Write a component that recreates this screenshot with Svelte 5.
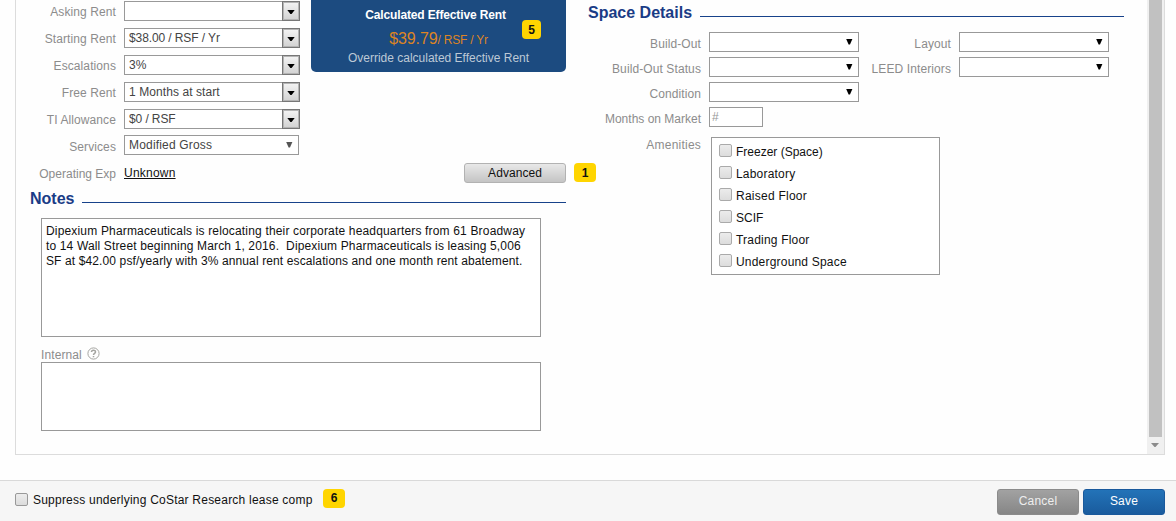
<script>
  const rentFields = [
    { label: 'Asking Rent', value: '', track: 0 },
    { label: 'Starting Rent', value: '$38.00 / RSF / Yr', track: -0.1 },
    { label: 'Escalations', value: '3%', track: 0 },
    { label: 'Free Rent', value: '1 Months at start', track: 0.08 },
    { label: 'TI Allowance', value: '$0 / RSF', track: -0.1 }
  ];
  const amenities = [
    { name: 'Freezer (Space)', track: 0 },
    { name: 'Laboratory', track: 0.2 },
    { name: 'Raised Floor', track: 0.25 },
    { name: 'SCIF', track: 0 },
    { name: 'Trading Floor', track: 0.2 },
    { name: 'Underground Space', track: 0.2 }
  ];
  const noteLines = [
    { text: 'Dipexium Pharmaceuticals is relocating their corporate headquarters from 61 Broadway', track: 0.17 },
    { text: 'to 14 Wall Street beginning March 1, 2016.  Dipexium Pharmaceuticals is leasing 5,006', track: 0.145 },
    { text: 'SF at $42.00 psf/yearly with 3% annual rent escalations and one month rent abatement.', track: 0.12 }
  ];
</script>

{#snippet arrow()}
  <svg class="arrow" width="7" height="6" viewBox="0 0 7 6"><path d="M0.2 0H6.4L4 5.6H2.6Z" fill="currentColor" /></svg>
{/snippet}

{#snippet picker(label)}
  <div class="detail">
    <span class="label">{label}</span>
    <div class="select">{@render arrow()}</div>
  </div>
{/snippet}

<div class="page">
  <main class="panel">
    <section class="left">
      <div class="top">
        <div class="fields">
          {#each rentFields as f}
            <div class="row">
              <span class="label">{f.label}</span>
              <div class="combo">
                <span class="value" style:letter-spacing="{f.track}px">{f.value}</span>
                <span class="drop"><svg width="8" height="4" viewBox="0 0 8 4"><path d="M0.3 0H7.7L4.6 4H3.4Z" fill="#000" /></svg></span>
              </div>
            </div>
          {/each}
          <div class="row services">
            <span class="label">Services</span>
            <div class="select"><span class="value">Modified Gross</span>{@render arrow()}</div>
          </div>
        </div>
        <div class="effective">
          <b>Calculated Effective Rent</b>
          <div class="price"><span class="amount">$39.79</span><span class="unit">/ RSF / Yr</span></div>
          <span class="override">Override calculated Effective Rent</span>
          <span class="badge five">5</span>
        </div>
      </div>
      <div class="operating">
        <span class="label">Operating Exp</span>
        <span class="unknown">Unknown</span>
        <button class="advanced">Advanced</button>
        <span class="badge one">1</span>
      </div>
      <h2 class="notes-title"><span>Notes</span><i></i></h2>
      <div class="area notes">
        {#each noteLines as line}<div style:letter-spacing="{line.track}px">{line.text}</div>{/each}
      </div>
      <div class="internal-label">
        <span>Internal</span>
        <svg width="13" height="13" viewBox="0 0 13 13" fill="none" stroke="#a4a4a0">
          <circle cx="6.5" cy="6.5" r="5.6" />
          <path d="M4.5 5.1C4.5 2.7 8.5 2.7 8.5 5C8.5 6.3 6.5 6.3 6.5 8M6.5 9V10.3" stroke-width="1.5" />
        </svg>
      </div>
      <div class="area internal"></div>
    </section>

    <section class="right">
      <h2><span>Space Details</span><i></i></h2>
      <div class="details">
        <div class="column">
          {@render picker('Build-Out')}
          {@render picker('Build-Out Status')}
          {@render picker('Condition')}
          <div class="detail">
            <span class="label tight">Months on Market</span>
            <div class="months">#</div>
          </div>
        </div>
        <div class="column second">
          {@render picker('Layout')}
          {@render picker('LEED Interiors')}
        </div>
      </div>
      <div class="amenities">
        <span class="label">Amenities</span>
        <div class="list">
          {#each amenities as a}
            <div class="option"><span class="check"></span><span style:letter-spacing="{a.track}px">{a.name}</span></div>
          {/each}
        </div>
      </div>
    </section>

    <div class="scrollbar">
      <div class="thumb"></div>
      <svg width="8" height="4" viewBox="0 0 8 4"><path d="M0 0H8L4.5 4H3.5Z" fill="#8b8b8b" /></svg>
    </div>
  </main>

  <footer>
    <span class="check"></span>
    <span class="suppress">Suppress underlying CoStar Research lease comp</span>
    <span class="badge six">6</span>
    <button class="cancel">Cancel</button>
    <button class="save">Save</button>
  </footer>
</div>

<style>
  :global(body) { background: #fefefe; overflow: hidden; }
  .page {
    box-sizing: border-box; width: 1176px; height: 521px; display: flex; flex-direction: column;
    font: 12px/15px "Liberation Sans", Arial, sans-serif; letter-spacing: 0.22px; color: #111; background: #fefefe;
  }
  .page * { box-sizing: border-box; }
  .panel {
    width: 1150px; height: 455px; margin-left: 15px; display: flex;
    border: 1px solid #dcdcdc; border-top: 0; background: #fefefe; flex: none;
  }
  .left { width: 550px; padding-left: 14px; flex: none; }
  .top { display: flex; height: 155px; }
  .fields { width: 270px; margin-right: 11px; padding-top: 1px; flex: none; }
  .row { display: flex; height: 27px; }
  .row.services { margin-top: -1px; }
  .row.services .label { padding-top: 5px; }
  .label { color: #8c8c8c; text-align: right; white-space: nowrap; letter-spacing: 0.1px; }
  .label.tight { letter-spacing: 0; }
  .row .label { width: 86px; margin-right: 8px; padding-top: 4px; }
  .combo { width: 176px; height: 20px; display: flex; justify-content: space-between; border: 1px solid #999; background: #fff; }
  .value { color: #444; padding: 2px 0 0 4px; line-height: 15px; white-space: nowrap; }
  .drop {
    width: 18px; height: 20px; margin: -1px -1px 0 0; border: 1px solid #777;
    box-shadow: inset 0 0 0 1px #b4b4b4;
    background: linear-gradient(#f4f4f4, #d2d2d2); display: flex; align-items: center; justify-content: center;
  }
  .drop svg { margin-top: 2px; }
  .select {
    width: 150px; height: 20px; border: 1px solid #999; background: #fff; color: #000;
    display: flex; justify-content: space-between;
  }
  .row .select { width: 175px; color: #555; }
  .row .select .value { letter-spacing: 0.18px; }
  .arrow { margin: 6px 5px 0 auto; }
  .effective {
    position: relative; width: 255px; height: 72px; border-radius: 0 0 5px 5px; background: #1c4b80;
    display: flex; flex-direction: column; align-items: center; padding-top: 8px; white-space: nowrap;
  }
  .effective b { color: #fff; letter-spacing: -0.14px; margin-right: 6px; }
  .price { color: #dc8424; height: 20px; margin-top: 6px; line-height: 20px; }
  .amount { font-size: 16px; letter-spacing: -0.1px; }
  .unit { letter-spacing: -0.22px; }
  .override { color: #bdc9d6; margin-top: 2px; letter-spacing: 0; }
  .badge {
    width: 22px; height: 19px; border-radius: 4px; background: #ffd500; color: #111; font-weight: bold;
    line-height: 20px; text-align: center; letter-spacing: 0;
  }
  .five { position: absolute; left: 211px; top: 20px; width: 19px; }
  .operating { display: flex; height: 34px; padding-top: 8px; margin-right: -40px; }
  .operating .label { width: 86px; margin-right: 8px; padding-top: 4px; letter-spacing: 0; }
  .unknown { width: 52px; margin-right: 288px; padding-top: 3px; text-decoration: underline; }
  button { padding: 0; font: inherit; letter-spacing: inherit; flex: none; }
  .advanced {
    width: 102px; height: 20px; border: 1px solid #b2b2b2; border-radius: 3px; color: #111;
    background: linear-gradient(#e8e8e8, #c4c4c4); letter-spacing: 0.05px;
  }
  .one { margin-left: 8px; }
  h2 { margin: 0; font: bold 16px/20px "Liberation Sans", Arial, sans-serif; letter-spacing: 0; color: #1a3c86; display: flex; }
  h2 i { flex: 1; height: 1px; margin: 13px 0 0 8px; background: #17428a; }
  .notes-title { height: 29px; }
  .area { width: 500px; margin-left: 11px; border: 1px solid #999; background: #fff; }
  .notes { height: 119px; padding: 5px 4px; white-space: pre; }
  .internal-label { height: 25px; margin-left: 11px; display: flex; padding-top: 11px; color: #8c8c8c; letter-spacing: 0.1px; }
  .internal-label svg { margin-left: 5px; margin-top: -1px; }
  .internal { height: 69px; }
  .right { margin-left: 22px; width: 536px; padding-top: 3px; flex: none; }
  .details { display: flex; padding-top: 9px; }
  .column { width: 271px; }
  .second { width: 250px; }
  .detail { display: flex; height: 25px; }
  .detail .label { width: 113px; margin-right: 8px; padding-top: 5px; }
  .second .label { width: 92px; }
  .months { width: 54px; height: 20px; border: 1px solid #999; background: #fff; color: #999; padding-left: 2px; line-height: 18px; }
  .amenities { display: flex; padding-top: 5px; }
  .amenities .label { width: 113px; margin-right: 10px; padding-top: 1px; letter-spacing: 0.22px; }
  .list { width: 229px; height: 138px; border: 1px solid #999; background: #fff; padding: 3px 7px; }
  .option { height: 22px; display: flex; align-items: center; gap: 4px; }
  .check { width: 13px; height: 13px; border: 1px solid #aaa; border-radius: 2px; background: linear-gradient(#ececec, #dcdcdc); flex: none; }
  .option .check { margin-top: -3px; }
  .scrollbar { margin-left: auto; width: 17px; background: #f0f0f0; display: flex; flex-direction: column; align-items: center; }
  .scrollbar svg { margin-right: 1px; }
  .thumb { width: 13px; height: 437px; background: #c1c1c1; margin-bottom: 6px; }
  footer {
    margin-top: 25px; height: 41px; border-top: 1px solid #d9d9d9; background: #f6f6f6;
    display: flex; padding: 0 11px 0 15px; flex: none;
  }
  footer .check { margin-top: 12px; border-color: #999; }
  .suppress { margin: 12px 0 0 5px; width: 290px; white-space: nowrap; }
  .six { margin-top: 8px; line-height: 19px; }
  .cancel, .save { width: 82px; height: 26px; margin-top: 8px; padding-bottom: 2px; border-radius: 3px; color: #fff; }
  .cancel { margin-left: auto; border: 1px solid #8b8b8b; background: linear-gradient(#a2a2a2, #868686); color: #eee; }
  .save { margin-left: 4px; border: 1px solid #19599c; background: linear-gradient(#2373b8, #195b9d); }
</style>
